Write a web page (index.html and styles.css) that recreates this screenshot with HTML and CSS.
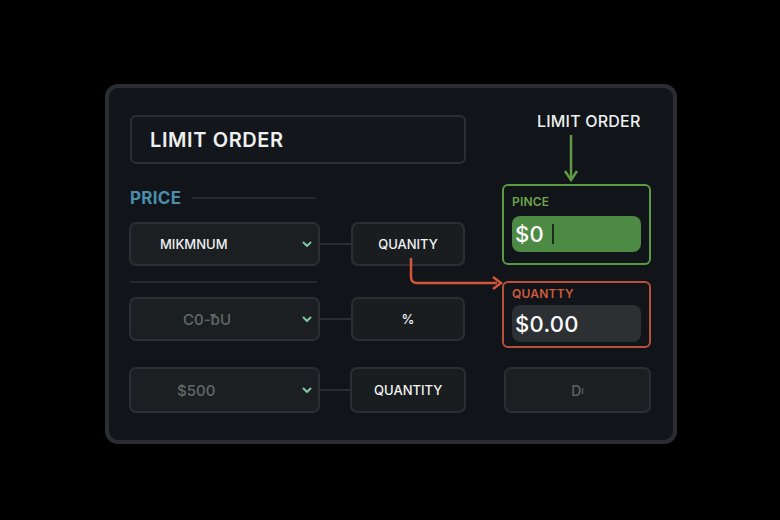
FILE: index.html
```html
<!DOCTYPE html>
<html>
<head>
<meta charset="utf-8">
<link rel="stylesheet" href="styles.css">
</head>
<body>
<div class="panel">
  <div class="left">
    <div class="title-box">LIMIT ORDER</div>
    <div class="section-head"><span class="section-label">PRICE</span><span class="section-line"></span></div>
    <div class="row row-1">
      <div class="select"><span class="select-text">MIKMNUM</span><svg class="chev" width="10" height="7" viewBox="0 0 10 7"><path d="M1.5 1.5 L5 5 L8.5 1.5" fill="none" stroke="#7cc7a2" stroke-width="2" stroke-linecap="round" stroke-linejoin="round"/></svg></div>
      <span class="link"></span>
      <div class="btn">QUANITY</div>
    </div>
    <div class="divider"></div>
    <div class="row row-2">
      <div class="select select-muted"><span class="select-text muted code">C0-ƀU</span><svg class="chev" width="10" height="7" viewBox="0 0 10 7"><path d="M1.5 1.5 L5 5 L8.5 1.5" fill="none" stroke="#7cc7a2" stroke-width="2" stroke-linecap="round" stroke-linejoin="round"/></svg></div>
      <span class="link"></span>
      <div class="btn">%</div>
    </div>
    <div class="row row-3">
      <div class="select select-muted"><span class="select-text muted">$500</span><svg class="chev" width="10" height="7" viewBox="0 0 10 7"><path d="M1.5 1.5 L5 5 L8.5 1.5" fill="none" stroke="#7cc7a2" stroke-width="2" stroke-linecap="round" stroke-linejoin="round"/></svg></div>
      <span class="link"></span>
      <div class="btn">QUANTITY</div>
    </div>
  </div>
  <div class="right">
    <div class="right-label">LIMIT ORDER</div>
    <svg class="down-arrow" width="16" height="48" viewBox="0 0 16 48"><path d="M8 1 V45" stroke="#5f9a45" stroke-width="2.5"/><path d="M2 37 L8 46 L14 37" fill="none" stroke="#5f9a45" stroke-width="2.5" stroke-linejoin="miter"/></svg>
    <div class="field field-green">
      <div class="field-label">PINCE</div>
      <div class="field-input"><span>$0</span><span class="caret"></span></div>
    </div>
    <div class="field field-red">
      <div class="field-label">QUANTTY</div>
      <div class="field-input"><span>$0.00</span></div>
    </div>
    <div class="ghost-btn">D<sub>ı</sub></div>
  </div>
  <svg class="red-arrow" width="100" height="36" viewBox="0 0 100 36"><path d="M2 0 V19 Q2 25 8 25 H88" fill="none" stroke="#d4553a" stroke-width="2.5"/><path d="M84 19 L92 25 L84 31" fill="none" stroke="#d4553a" stroke-width="2.5"/></svg>
</div>
</body>
</html>
```
FILE: styles.css
```css
* { box-sizing: border-box; }
html, body { margin: 0; background: #000; }
body {
  width: 780px;
  height: 520px;
  padding: 84px 0 0 105px;
  font-family: Inter, "Noto Sans", sans-serif;
  color: #eef0f0;
}
.panel {
  position: relative;
  width: 572px;
  height: 360px;
  background: #111418;
  border: 4px solid #2a2d31;
  border-radius: 13px;
  display: flex;
  padding: 27px 22px 0 21px;
}
.left { width: 336px; display: flex; flex-direction: column; }
.title-box {
  height: 49px;
  border: 2px solid #2b2f33;
  border-radius: 6px;
  background: #13161a;
  padding-left: 18px;
  display: flex;
  align-items: center;
  font-size: 20px;
  font-weight: 600;
  letter-spacing: 0.6px;
}
.section-head {
  margin-top: 24px;
  height: 19px;
  display: flex;
  align-items: center;
}
.section-label {
  color: #4b8fad;
  font-size: 17px;
  font-weight: 700;
  letter-spacing: 0.3px;
}
.section-line {
  width: 124px;
  height: 2px;
  background: #262a2e;
  margin-left: 11px;
}
.row {
  display: flex;
  align-items: center;
  margin-left: -1px;
}
.row-1 { margin-top: 15px; }
.row-2 { margin-top: 14px; }
.row-3 { margin-top: 26px; }
.select {
  width: 191px;
  height: 44px;
  background: #1c1f22;
  border: 2px solid #2b2f33;
  border-radius: 7px;
  display: flex;
  align-items: center;
  padding: 0 6px 0 29px;
}
.select-muted { padding-left: 46px; }
.select-text {
  flex: 1;
  font-size: 13px;
  font-weight: 500;
  color: #f0f2f2;
}
.select-text.muted { color: #5f6a67; font-size: 15px; font-weight: 500; }
.select-text.code { padding-left: 6px; }
.chev { flex: none; }
.link {
  width: 31px;
  height: 2px;
  background: #2a2e32;
}
.btn {
  width: 114px;
  height: 44px;
  background: #1a1d20;
  border: 2px solid #2b2f33;
  border-radius: 7px;
  display: flex;
  align-items: center;
  justify-content: center;
  font-size: 13px;
  font-weight: 500;
  color: #f2f4f4;
}
.row-3 .select, .row-3 .btn { height: 46px; }
.row-3 .btn { width: 116px; }
.divider {
  margin-top: 15px;
  width: 187px;
  height: 2px;
  background: #25292d;
}
.right {
  margin-left: 36px;
  width: 149px;
  display: flex;
  flex-direction: column;
}
.right-label {
  margin-top: -4px;
  margin-left: 35px;
  font-size: 16px;
  font-weight: 500;
  height: 20px;
  line-height: 20px;
  letter-spacing: 0.2px;
}
.down-arrow { margin: 3px 0 0 61px; display: block; }
.field {
  border: 2px solid;
  border-radius: 6px;
  padding: 0 8px;
}
.field-green {
  margin-top: 2px;
  height: 81px;
  border-color: #5a9a47;
  padding-top: 8px;
}
.field-red {
  margin-top: 16px;
  height: 67px;
  border-color: #b9503a;
  padding-top: 3px;
}
.field-label {
  font-size: 12px;
  font-weight: 600;
  height: 16px;
  line-height: 16px;
  letter-spacing: 0.2px;
}
.field-green .field-label { color: #6ea54d; }
.field-red .field-label { color: #cf5a3e; }
.field-input {
  margin-top: 6px;
  height: 36px;
  border-radius: 8px;
  display: flex;
  align-items: center;
  padding-left: 3px;
  font-size: 22px;
  font-weight: 500;
  color: #fbfbfb;
  letter-spacing: 0.3px;
}
.field-green .field-input { background: #4d8a43; }
.field-red .field-input { background: #2d3033; margin-top: 3px; height: 37px; }
.caret {
  width: 2px;
  height: 20px;
  background: #1e2a1c;
  margin-left: 8px;
}
.ghost-btn {
  margin-top: 19px;
  margin-left: 2px;
  height: 46px;
  background: #1c1f22;
  border: 2px solid #2b2f33;
  border-radius: 7px;
  display: flex;
  align-items: center;
  justify-content: center;
  color: #5c6462;
  font-size: 14px;
  font-weight: 500;
}
.ghost-btn sub { font-size: 10px; }
.red-arrow {
  position: absolute;
  left: 300px;
  top: 170px;
}
```
